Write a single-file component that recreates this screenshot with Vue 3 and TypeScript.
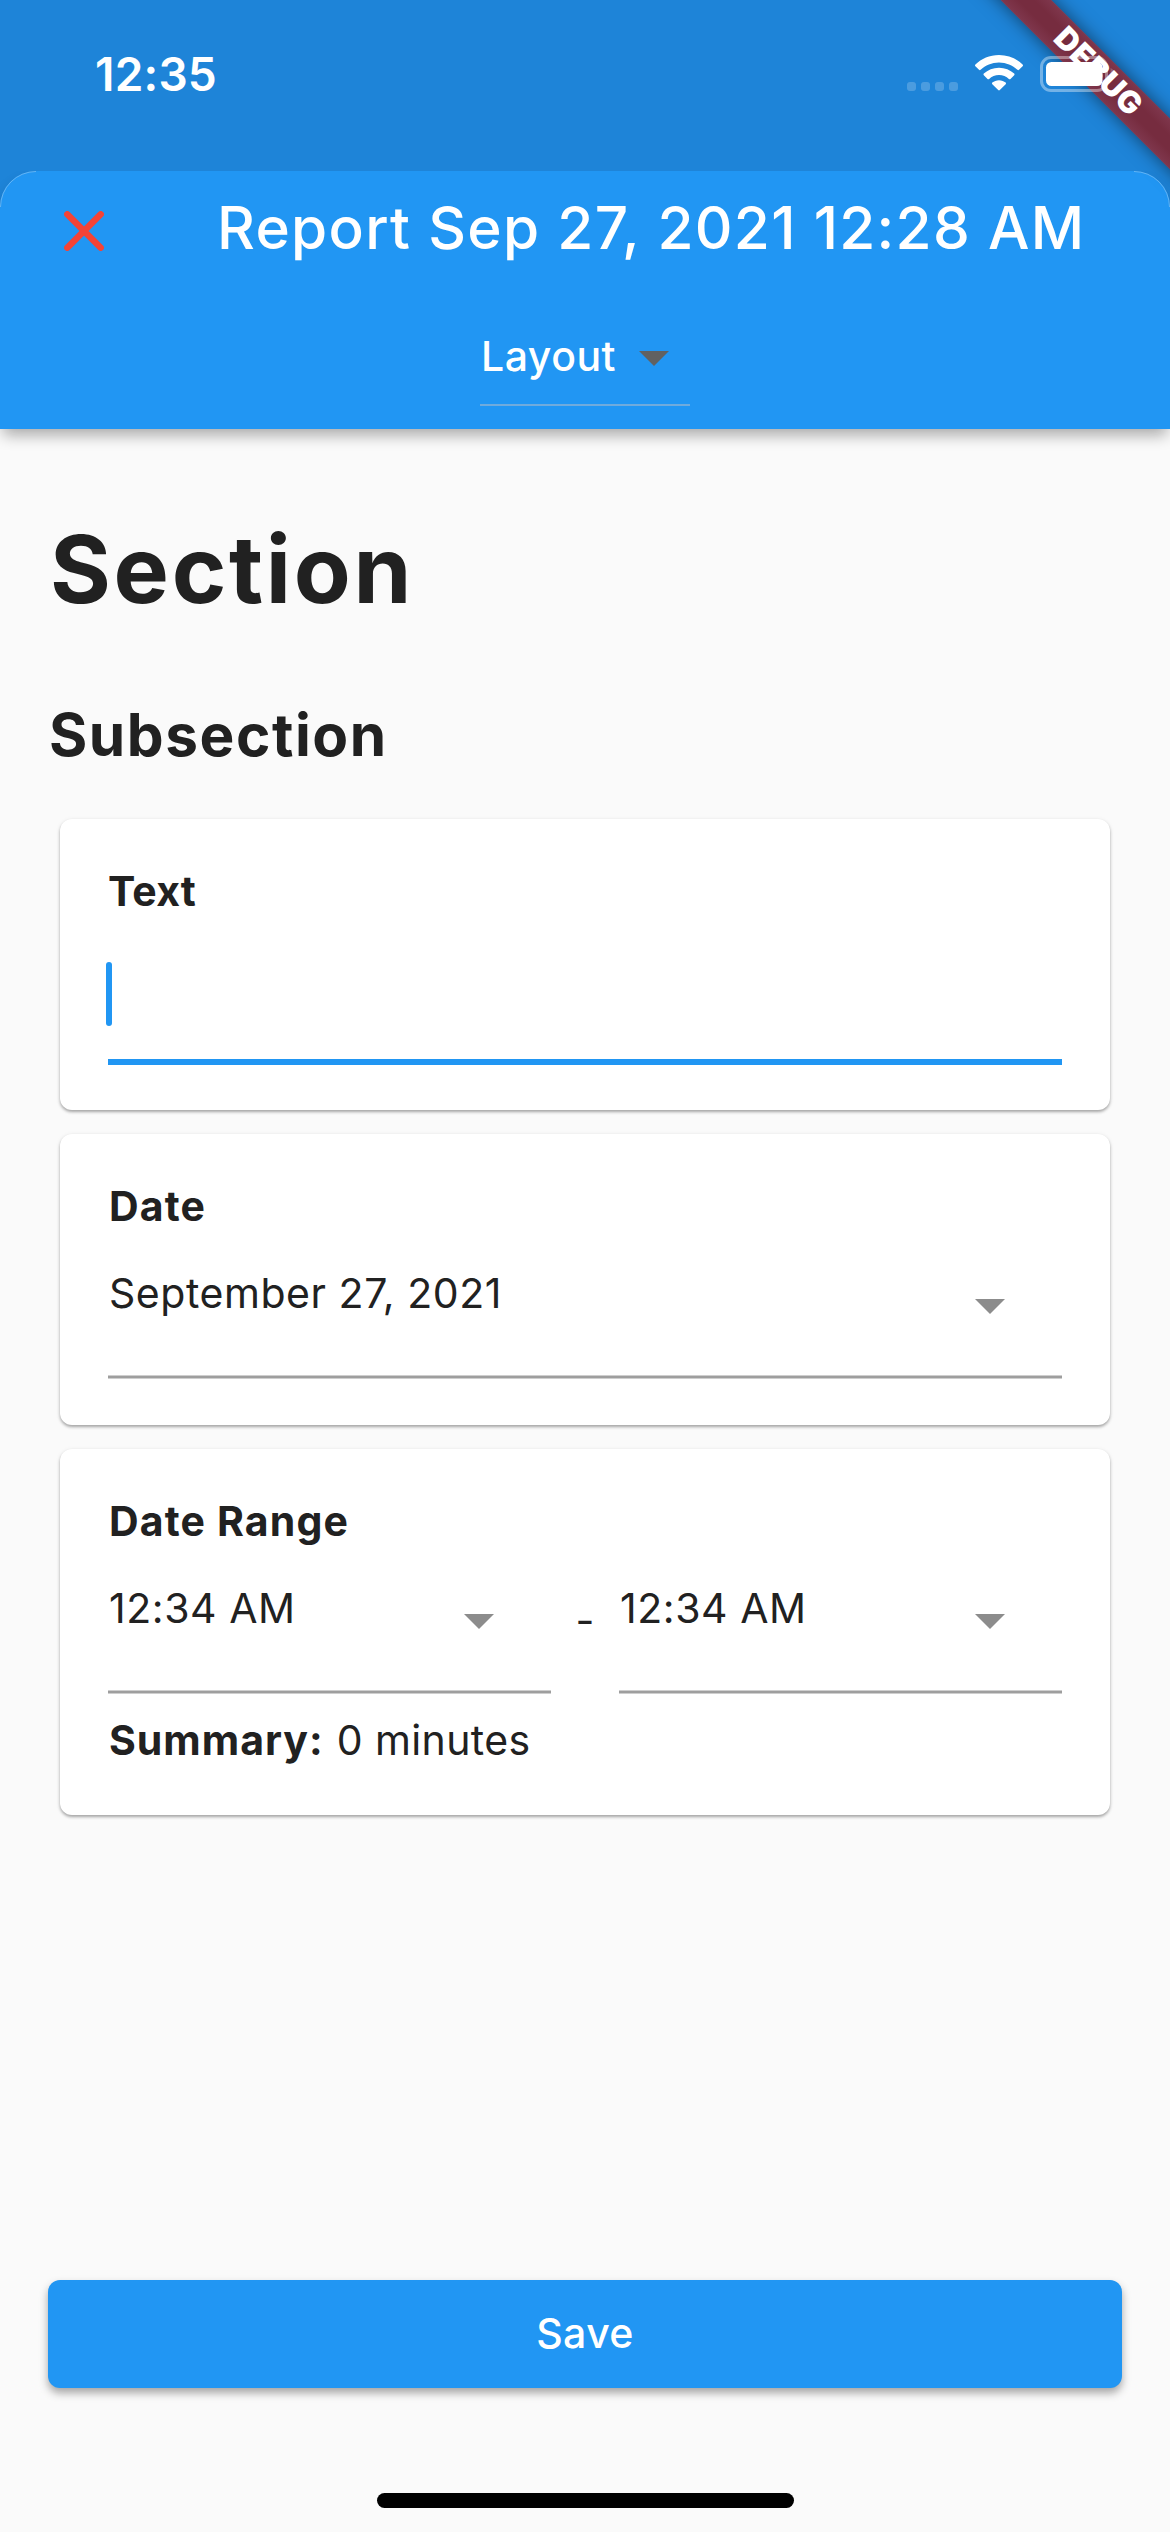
<script setup lang="ts">
import { ref } from 'vue'

const clock = ref('12:35')
const title = ref('Report Sep 27, 2021 12:28 AM')
const date = ref('September 27, 2021')
const rangeStart = ref('12:34 AM')
const rangeEnd = ref('12:34 AM')
const summary = ref('0 minutes')
</script>

<template>
  <div class="screen">
    <div class="banner">DEBUG</div>

    <div class="status">
      <span class="clock">{{ clock }}</span>
      <div class="indicators">
        <div class="cell"><i v-for="n in 4" :key="n" class="dot"></i></div>
        <svg class="wifi" width="48" height="36" viewBox="0 0 48 36">
          <path d="M24 0C33.4 0 41.6 3.7 47.600 9.600Q48.400 10.400 47.600 11.200L44 14.800Q43.200 15.600 42.400 14.800C37.600 10.200 31.200 7.400 24 7.400S10.400 10.200 5.600 14.800Q4.800 15.600 4 14.800L.4 11.200Q-.4 10.400 .4 9.600C6.400 3.700 14.600 0 24 0Z" />
          <path d="M24 12.700C29.900 12.700 35.200 14.900 39.200 18.600Q40 19.400 39.200 20.200L35.500 23.900Q34.700 24.700 33.900 23.900C31.300 21.500 27.800 20.100 24 20.100S16.700 21.500 14.100 23.900Q13.300 24.700 12.500 23.900L8.800 20.200Q8 19.400 8.800 18.600C12.800 14.900 18.100 12.700 24 12.700Z" />
          <path d="M24 25.200C26.600 25.200 28.900 26.100 30.700 27.600Q31.500 28.400 30.700 29.200L24.800 35.100Q24 35.900 23.200 35.100L17.300 29.200Q16.500 28.400 17.300 27.600C19.100 26.100 21.400 25.200 24 25.200Z" />
        </svg>
        <svg class="battery" width="76" height="36" viewBox="0 0 76 36">
          <rect x="1.500" y="1.500" width="65" height="33" rx="9.500" fill="none" stroke="#fff" stroke-opacity=".38" stroke-width="3" />
          <rect x="6" y="6" width="56.500" height="24" rx="5.500" fill="#fff" />
          <path d="M70.500 12C73 13 74.500 15.300 74.500 18S73 23 70.500 24Z" fill="#fff" fill-opacity=".22" />
        </svg>
      </div>
    </div>

    <header class="appbar">
      <svg class="corner corner-left" width="36" height="36" viewBox="0 0 36 36"><path d="M.5 36A35.500 35.500 0 0 1 36 .5" /></svg>
      <svg class="corner corner-right" width="36" height="36" viewBox="0 0 36 36"><path d="M0 .5A35.500 35.500 0 0 1 35.500 36" /></svg>
      <div class="title-row">
        <svg class="close" width="40" height="40" viewBox="0 0 40 40"><path d="M3.300 3.300L36.700 36.700M36.700 3.300L3.300 36.700" /></svg>
        <h1 class="title">{{ title }}</h1>
      </div>
      <div class="layout-select">
        <span class="layout-label">Layout</span>
        <svg class="caret-dark" width="30" height="15" viewBox="0 0 30 15"><path d="M0 0H30L15 15Z" /></svg>
      </div>
    </header>

    <main class="content">
      <h2 class="section">Section</h2>
      <h3 class="subsection">Subsection</h3>

      <section class="card card-text">
        <div class="label label-text">Text</div>
        <div class="input"><span class="cursor"></span></div>
      </section>

      <section class="card card-date">
        <div class="label">Date</div>
        <div class="picker">
          <span class="value">{{ date }}</span>
          <svg class="caret" width="30" height="15" viewBox="0 0 30 15"><path d="M0 0H30L15 15Z" /></svg>
        </div>
      </section>

      <section class="card card-range">
        <div class="label">Date Range</div>
        <div class="range">
          <div class="picker">
            <span class="value">{{ rangeStart }}</span>
            <svg class="caret" width="30" height="15" viewBox="0 0 30 15"><path d="M0 0H30L15 15Z" /></svg>
          </div>
          <span class="dash">-</span>
          <div class="picker">
            <span class="value">{{ rangeEnd }}</span>
            <svg class="caret" width="30" height="15" viewBox="0 0 30 15"><path d="M0 0H30L15 15Z" /></svg>
          </div>
        </div>
        <div class="summary"><b>Summary:</b><span>{{ summary }}</span></div>
      </section>
    </main>

    <button class="save" type="button">Save</button>
    <div class="home-indicator"></div>
  </div>
</template>

<style>
html,
body {
  margin: 0;
  background: #fafafa;
}
</style>

<style scoped>
.screen {
  position: relative;
  display: flex;
  flex-direction: column;
  width: 1170px;
  height: 2532px;
  overflow: hidden;
  background: linear-gradient(#1e84d8 0 220px, #fafafa 220px);
  color: #212121;
  font-family: Inter, "Liberation Sans", sans-serif;
  font-size: 41px;
  line-height: 48px;
}

.banner {
  position: absolute;
  z-index: 1;
  left: 948px;
  top: 54px;
  width: 300px;
  height: 36px;
  transform: rotate(45deg);
  background: linear-gradient(#7f374d, #762c3f 35%, #762c3f 65%, #7f374d);
  box-shadow: 0 0 18px rgba(0, 0, 0, 0.5);
  color: #fff;
  font-size: 31px;
  font-weight: 900;
  line-height: 33px;
  letter-spacing: 0.5px;
  text-align: center;
}

.status {
  position: relative;
  z-index: 2;
  display: flex;
  justify-content: space-between;
  height: 171px;
  flex: none;
  box-sizing: border-box;
  padding: 50px 54px 0 95px;
  color: #fff;
}
.clock {
  font-size: 46px;
  font-weight: 600;
  line-height: 48px;
  letter-spacing: 0.2px;
}
.indicators {
  display: flex;
  align-items: flex-start;
  padding-top: 5px;
}
.cell {
  display: flex;
  gap: 5px;
  margin: 27px 17px 0 0;
}
.dot {
  width: 9px;
  height: 9px;
  border-radius: 3px;
  background: rgba(255, 255, 255, 0.2);
}
.wifi {
  fill: #fff;
}
.battery {
  margin: 1px 0 0 17px;
}

.appbar {
  position: relative;
  display: flex;
  flex-direction: column;
  align-items: center;
  flex: none;
  height: 258px;
  border-radius: 36px 36px 0 0;
  background: #2196f3;
  box-shadow: 0 9px 15px -3px rgba(0, 0, 0, 0.33);
  clip-path: inset(0 0 -50px 0);
  color: #fff;
}
.corner {
  position: absolute;
  top: 0;
  fill: none;
  stroke: rgba(255, 255, 255, 0.3);
}
.corner-left {
  left: 0;
}
.corner-right {
  right: 0;
}
.title-row {
  display: flex;
  align-items: center;
  align-self: stretch;
  height: 114px;
  padding-left: 64px;
}
.close {
  flex: none;
  margin-top: 6px;
  fill: none;
  stroke: #f44336;
  stroke-width: 6.5;
  stroke-linecap: round;
}
.title {
  margin: 0 0 0 113px;
  font-size: 58.5px;
  font-weight: 525;
  line-height: 72px;
  letter-spacing: 1.3px;
  white-space: nowrap;
}
.layout-select {
  display: flex;
  align-items: center;
  box-sizing: border-box;
  width: 210px;
  height: 98px;
  margin-top: 23px;
  border-bottom: 2px solid #6fabdd;
}
.layout-label {
  width: 158px;
  padding-left: 1px;
  font-weight: 525;
  letter-spacing: 0.5px;
}
.caret-dark {
  margin-top: 4px;
  fill: #616161;
}

.content {
  flex: 1;
  padding: 84px 48px 0;
}
.section {
  margin: 0 0 75px;
  padding-left: 2px;
  font-size: 93px;
  font-weight: 700;
  line-height: 112px;
  letter-spacing: 2.7px;
}
.subsection {
  margin: 0 0 49px;
  padding-left: 1px;
  font-size: 58.5px;
  font-weight: 700;
  line-height: 70px;
  letter-spacing: 1.55px;
}
.card {
  box-sizing: border-box;
  margin: 0 12px 24px;
  padding: 48px 48px 0;
  border-radius: 12px;
  background: #fff;
  box-shadow: 0 2px 3px rgba(0, 0, 0, 0.3), 0 1px 5px rgba(0, 0, 0, 0.08);
}
.card-text,
.card-date {
  height: 291px;
}
.card-range {
  height: 366px;
}
.label {
  padding-left: 1px;
  font-weight: 700;
  letter-spacing: 1.15px;
}
.label-text {
  padding-left: 0;
  letter-spacing: 0.2px;
}
.input {
  display: flex;
  height: 144px;
  border-bottom: 6px solid #2196f3;
}
.cursor {
  width: 6px;
  height: 64px;
  margin: 47px 0 0 -2px;
  border-radius: 3px;
  background: #2196f3;
}
.picker {
  display: flex;
  justify-content: space-between;
  flex: 1;
  box-sizing: border-box;
  height: 149px;
  padding: 39px 57px 0 1px;
  background:
    linear-gradient(#9e9e9e, #9e9e9e) 0 146px / 100% 2px no-repeat,
    linear-gradient(#cecece, #cecece) 0 145px / 100% 4px no-repeat;
}
.value {
  letter-spacing: 0.55px;
}
.caret {
  margin-top: 30px;
  fill: #8c8c8c;
}
.range {
  display: flex;
}
.dash {
  width: 68px;
  padding-top: 51px;
  text-align: center;
}
.summary {
  display: flex;
  gap: 13px;
  margin-top: 22px;
  padding-left: 1px;
  letter-spacing: 0.4px;
}
.summary b {
  letter-spacing: 1px;
}

.save {
  flex: none;
  height: 108px;
  margin: 0 48px 105px;
  padding: 0 0 2px;
  border: 0;
  border-radius: 12px;
  background: #2196f3;
  box-shadow: 0 5px 9px rgba(0, 0, 0, 0.34);
  color: #fff;
  font: 525 41px/48px Inter, "Liberation Sans", sans-serif;
  letter-spacing: 0.4px;
}
.home-indicator {
  flex: none;
  width: 417px;
  height: 15px;
  margin: 0 auto 24px 377px;
  border-radius: 8px;
  background: #000;
}
</style>
